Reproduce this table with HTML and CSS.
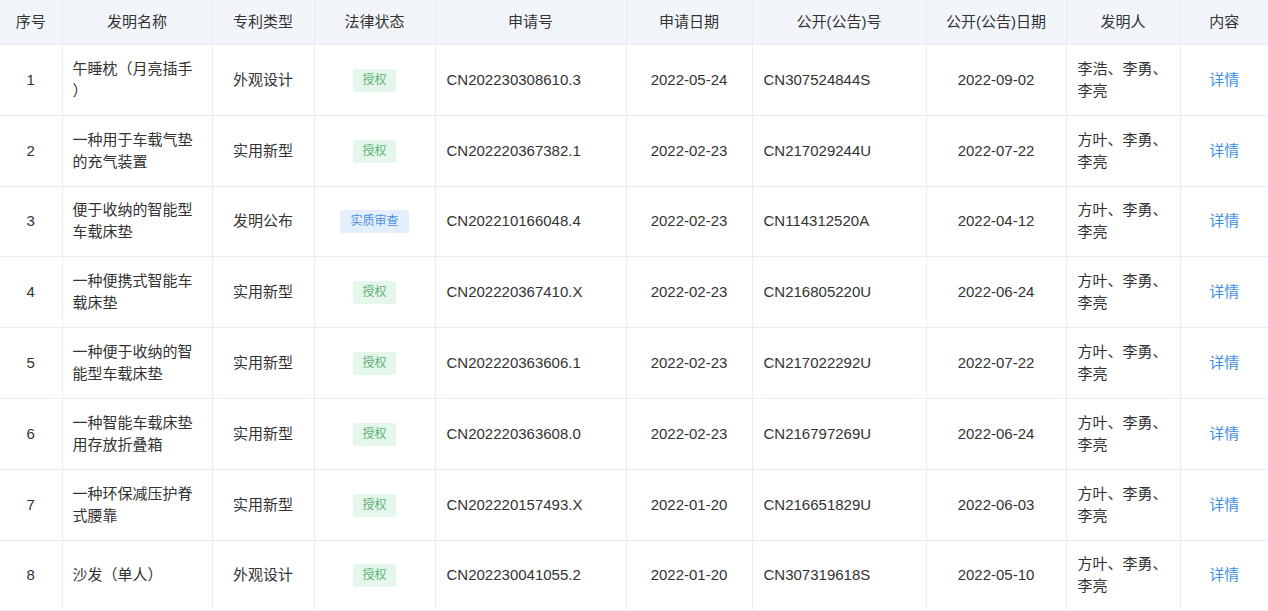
FILE: index.html
```html
<!DOCTYPE html>
<html lang="zh">
<head>
<meta charset="utf-8">
<link rel="stylesheet" href="styles.css">
</head>
<body>
<table class="patents">
  <colgroup>
    <col class="c-no"><col class="c-name"><col class="c-type"><col class="c-status"><col class="c-app"><col class="c-appdate"><col class="c-pub"><col class="c-pubdate"><col class="c-inv"><col class="c-act">
  </colgroup>
  <thead>
    <tr>
      <th>序号</th><th>发明名称</th><th>专利类型</th><th>法律状态</th><th>申请号</th><th>申请日期</th><th>公开(公告)号</th><th>公开(公告)日期</th><th>发明人</th><th>内容</th>
    </tr>
  </thead>
  <tbody>
    <tr>
      <td class="center">1</td><td class="name">午睡枕（月亮插手）</td><td class="center">外观设计</td><td class="center"><span class="tag tag-green">授权</span></td><td class="left">CN202230308610.3</td><td class="center">2022-05-24</td><td class="left">CN307524844S</td><td class="center">2022-09-02</td><td class="left">李浩、李勇、李亮</td><td class="center"><a class="link">详情</a></td>
    </tr>
    <tr>
      <td class="center">2</td><td class="name">一种用于车载气垫的充气装置</td><td class="center">实用新型</td><td class="center"><span class="tag tag-green">授权</span></td><td class="left">CN202220367382.1</td><td class="center">2022-02-23</td><td class="left">CN217029244U</td><td class="center">2022-07-22</td><td class="left">方叶、李勇、李亮</td><td class="center"><a class="link">详情</a></td>
    </tr>
    <tr>
      <td class="center">3</td><td class="name">便于收纳的智能型车载床垫</td><td class="center">发明公布</td><td class="center"><span class="tag tag-blue">实质审查</span></td><td class="left">CN202210166048.4</td><td class="center">2022-02-23</td><td class="left">CN114312520A</td><td class="center">2022-04-12</td><td class="left">方叶、李勇、李亮</td><td class="center"><a class="link">详情</a></td>
    </tr>
    <tr>
      <td class="center">4</td><td class="name">一种便携式智能车载床垫</td><td class="center">实用新型</td><td class="center"><span class="tag tag-green">授权</span></td><td class="left">CN202220367410.X</td><td class="center">2022-02-23</td><td class="left">CN216805220U</td><td class="center">2022-06-24</td><td class="left">方叶、李勇、李亮</td><td class="center"><a class="link">详情</a></td>
    </tr>
    <tr>
      <td class="center">5</td><td class="name">一种便于收纳的智能型车载床垫</td><td class="center">实用新型</td><td class="center"><span class="tag tag-green">授权</span></td><td class="left">CN202220363606.1</td><td class="center">2022-02-23</td><td class="left">CN217022292U</td><td class="center">2022-07-22</td><td class="left">方叶、李勇、李亮</td><td class="center"><a class="link">详情</a></td>
    </tr>
    <tr>
      <td class="center">6</td><td class="name">一种智能车载床垫用存放折叠箱</td><td class="center">实用新型</td><td class="center"><span class="tag tag-green">授权</span></td><td class="left">CN202220363608.0</td><td class="center">2022-02-23</td><td class="left">CN216797269U</td><td class="center">2022-06-24</td><td class="left">方叶、李勇、李亮</td><td class="center"><a class="link">详情</a></td>
    </tr>
    <tr>
      <td class="center">7</td><td class="name">一种环保减压护脊式腰靠</td><td class="center">实用新型</td><td class="center"><span class="tag tag-green">授权</span></td><td class="left">CN202220157493.X</td><td class="center">2022-01-20</td><td class="left">CN216651829U</td><td class="center">2022-06-03</td><td class="left">方叶、李勇、李亮</td><td class="center"><a class="link">详情</a></td>
    </tr>
    <tr>
      <td class="center">8</td><td class="name">沙发（单人）</td><td class="center">外观设计</td><td class="center"><span class="tag tag-green">授权</span></td><td class="left">CN202230041055.2</td><td class="center">2022-01-20</td><td class="left">CN307319618S</td><td class="center">2022-05-10</td><td class="left">方叶、李勇、李亮</td><td class="center"><a class="link">详情</a></td>
    </tr>
  </tbody>
</table>
</body>
</html>
```

FILE: styles.css
```css
html, body {
  margin: 0;
  padding: 0;
  background: #ffffff;
}
body {
  font-family: "Liberation Sans", "Noto Sans CJK SC", sans-serif;
  font-size: 15px;
  color: #333333;
  text-spacing-trim: space-all;
}
.patents {
  width: 1268px;
  table-layout: fixed;
  border-collapse: collapse;
}
.c-no { width: 62px; }
.c-name { width: 150px; }
.c-type { width: 102px; }
.c-status { width: 121px; }
.c-app { width: 191px; }
.c-appdate { width: 126px; }
.c-pub { width: 174px; }
.c-pubdate { width: 140px; }
.c-inv { width: 114px; }
.c-act { width: 88px; }

.patents th {
  height: 44px;
  background: #f2f6fb;
  font-weight: normal;
  color: #333333;
  text-align: center;
  border: 1px solid #e9edf3;
  border-top: none;
  padding: 0 6px;
  line-height: 22px;
}
.patents td {
  height: 69.8px;
  border: 1px solid #e9edf3;
  line-height: 22px;
  padding: 0 11px;
  vertical-align: middle;
  word-break: break-all;
  text-spacing-trim: space-all;
}
.patents th:first-child, .patents td:first-child { border-left: none; }
.patents th:last-child, .patents td:last-child { border-right: none; }
.center { text-align: center; }
.left { text-align: left; }
.patents td.name {
  text-align: left;
  padding-left: 10px;
  padding-right: 10px;
  line-break: anywhere;
}
.tag {
  display: inline-block;
  font-size: 12px;
  line-height: 23px;
  height: 23px;
  padding: 0 9px;
  border-radius: 2px;
}
.tag-green {
  background: #e5f6ea;
  color: #5bb277;
}
.tag-blue {
  background: #e3effd;
  color: #4b90e2;
  padding: 0 10px;
}
.link {
  color: #3d8ee6;
  cursor: pointer;
}
```
